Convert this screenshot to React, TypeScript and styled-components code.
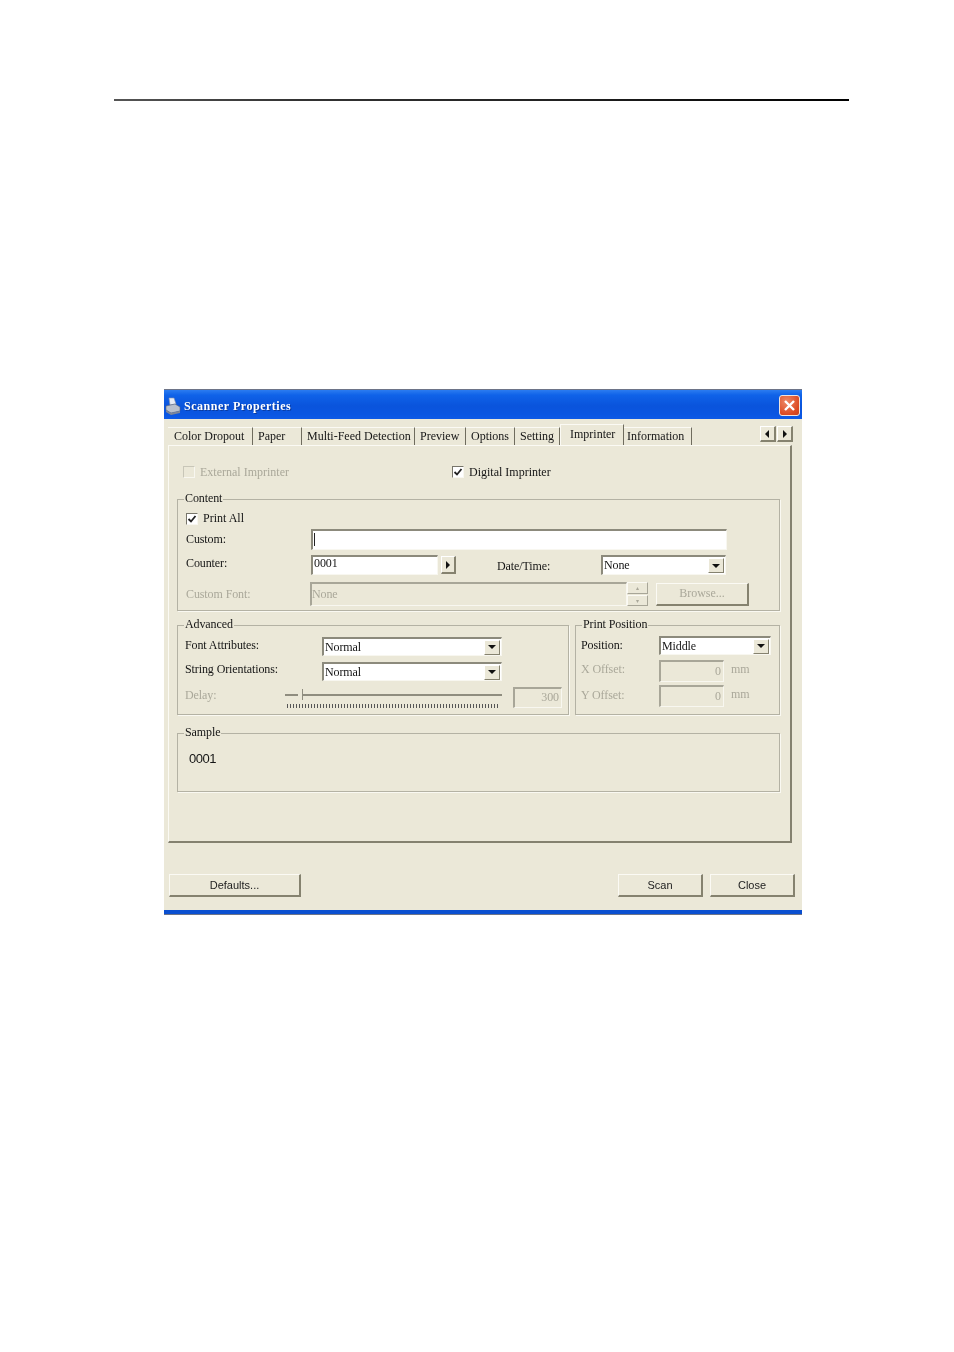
import styled, { createGlobalStyle } from "styled-components";

const GlobalStyle = createGlobalStyle`
  html, body {
    margin: 0;
    padding: 0;
    background: #fff;
  }
  body {
    font-family: "Liberation Serif", "Times New Roman", serif;
    font-size: 12px;
    letter-spacing: -0.1px;
    color: #151515;
  }
  * {
    box-sizing: border-box;
  }
`;

const Page = styled.div`
  width: 954px;
  height: 1352px;
  padding-top: 99px;
  overflow: hidden;
`;

const Rule = styled.hr`
  width: 735px;
  height: 2px;
  margin: 0 0 0 114px;
  border: none;
  background: linear-gradient(90deg, #555 0, #333 25%, #222 60%, #000 100%);
`;

const Dialog = styled.div`
  display: flex;
  flex-direction: column;
  width: 638px;
  height: 526px;
  margin: 288px 0 0 164px;
  background: #ebe8d8;
  filter: blur(0.45px);
`;

const TitleBar = styled.div`
  display: flex;
  align-items: center;
  height: 30px;
  padding: 2px 2px 0 1px;
  border-top: 1px solid #6d7488;
  background: linear-gradient(180deg, #2b7cf0 0, #0f62e8 18%, #0a54dc 55%, #0a56e2 85%, #0e5ae6 100%);
`;

const TitleText = styled.span`
  margin: 2px 0 0 3px;
  color: #fff;
  font-weight: 700;
  font-size: 12px;
  letter-spacing: 0.52px;
  text-shadow: 1px 1px 0 #0a3a9c;
`;

const CloseBox = styled.div`
  display: flex;
  align-items: center;
  justify-content: center;
  width: 21px;
  height: 21px;
  margin-left: auto;
  border: 1px solid #f0e4dc;
  border-radius: 3px;
  background: radial-gradient(circle at 35% 30%, #ee8a68, #dc4a22 70%, #c8401c);
`;

const TabStrip = styled.div`
  display: flex;
  align-items: flex-end;
  height: 26px;
  padding: 0 9px 0 4px;
`;

const Tab = styled.div<{ $w: number; $pad: number; $active?: boolean }>`
  display: flex;
  align-items: center;
  flex: none;
  width: ${(p) => p.$w}px;
  height: ${(p) => (p.$active ? 21 : 18)}px;
  padding: 0 0 ${(p) => (p.$active ? 2 : 0)}px ${(p) => p.$pad}px;
  border-top: 1px solid #fbfaf4;
  border-right: 1px solid #6f6c5e;
  border-left: ${(p) => (p.$active ? "1px solid #fbfaf4" : "none")};
  letter-spacing: 0;
  white-space: nowrap;
`;

const Scroller = styled.div`
  display: flex;
  align-self: flex-start;
  gap: 1px;
  margin: 7px 0 0 auto;
`;

const ScrollBtn = styled.div`
  display: flex;
  align-items: center;
  justify-content: center;
  width: 16px;
  height: 16px;
  border-top: 1px solid #fff;
  border-left: 1px solid #fff;
  border-right: 2px solid #85826f;
  border-bottom: 2px solid #85826f;
`;

const TabPanel = styled.div`
  display: flex;
  flex-direction: column;
  width: 624px;
  height: 398px;
  margin-left: 4px;
  padding: 18px 10px 0 8px;
  border-top: 1px solid #fbfaf4;
  border-left: 1px solid #fbfaf4;
  border-right: 2px solid #84816f;
  border-bottom: 2px solid #84816f;
`;

const ImprinterRow = styled.div`
  display: flex;
  height: 16px;
  padding-left: 6px;
`;

const Check = styled.label<{ $off?: boolean; $w?: number }>`
  display: flex;
  align-items: center;
  gap: 5px;
  width: ${(p) => (p.$w ? `${p.$w}px` : "auto")};
  color: ${(p) => (p.$off ? "#aaa89a" : "inherit")};
  letter-spacing: 0;
`;

const InsetCheck = styled(Check)`
  margin-left: 1px;
`;

const Box = styled.span<{ $off?: boolean }>`
  display: flex;
  align-items: center;
  justify-content: center;
  flex: none;
  width: 12px;
  height: 12px;
  border: 1px solid ${(p) => (p.$off ? "#c8c6b8" : "#77756a")};
  border-right-color: #f8f7f0;
  border-bottom-color: #f8f7f0;
  background: ${(p) => (p.$off ? "#ebe8d8" : "#fff")};
`;

const Group = styled.fieldset<{ $h: number; $w?: number }>`
  min-width: 0;
  width: ${(p) => (p.$w ? `${p.$w}px` : "100%")};
  height: ${(p) => p.$h}px;
  margin: 0;
  padding: 0 7px;
  border: 1px solid #b4b2a4;
  box-shadow: 1px 1px 0 #faf9f2;
`;

const Legend = styled.legend`
  height: 13px;
  margin-left: -1px;
  padding: 0 1px;
  line-height: 11px;
`;

const ContentGroup = styled(Group)`
  margin-top: 13px;
`;

const GroupRow = styled.div`
  display: flex;
  gap: 6px;
  margin-top: 8px;
`;

const SampleGroup = styled(Group)`
  margin-top: 12px;
`;

const Row = styled.div<{ $h: number; $mt?: number }>`
  display: flex;
  align-items: center;
  height: ${(p) => p.$h}px;
  margin-top: ${(p) => p.$mt ?? 0}px;
`;

const Label = styled.span<{ $w: number; $off?: boolean; $mt?: number; $ml?: number }>`
  flex: none;
  width: ${(p) => p.$w}px;
  margin-top: ${(p) => p.$mt ?? 0}px;
  margin-left: ${(p) => p.$ml ?? 0}px;
  color: ${(p) => (p.$off ? "#aaa89a" : "inherit")};
  white-space: nowrap;
`;

const Field = styled.div<{ $w: number; $off?: boolean; $start?: boolean }>`
  display: flex;
  align-items: center;
  justify-content: ${(p) => (p.$off && !p.$start ? "flex-end" : "flex-start")};
  flex: none;
  width: ${(p) => p.$w}px;
  height: 100%;
  padding: 0 2px 1px ${(p) => (p.$start ? 0 : 1)}px;
  border-top: 2px solid ${(p) => (p.$off ? "#a8a698" : "#8c8a7c")};
  border-left: 2px solid ${(p) => (p.$off ? "#a8a698" : "#8c8a7c")};
  border-right: 1px solid #f8f7f0;
  border-bottom: 1px solid #f8f7f0;
  background: ${(p) => (p.$off ? "#ebe8d8" : "#fff")};
  color: ${(p) => (p.$off ? "#aaa89a" : "inherit")};
`;

const Caret = styled.span`
  width: 1px;
  height: 13px;
  background: #222;
`;

const CounterValue = styled.span`
  margin-top: -4px;
`;

const SelectBox = styled(Field)`
  justify-content: space-between;
  padding: 0 0 0 1px;
`;

const DropBtn = styled.span`
  display: flex;
  align-items: center;
  justify-content: center;
  width: 16px;
  height: 15px;
  margin-right: 1px;
  border-top: 1px solid #fff;
  border-left: 1px solid #fff;
  border-right: 1px solid #85826f;
  border-bottom: 1px solid #85826f;
  background: #ebe8d8;
`;

const MiniBtn = styled(ScrollBtn)`
  width: 15px;
  height: 18px;
  margin-left: 3px;
`;

const DelayField = styled(Field)`
  margin-left: 11px;
`;

const Spinner = styled.div`
  display: flex;
  flex-direction: column;
  gap: 1px;
  width: 21px;
  height: 24px;
`;

const SpinBtn = styled.div`
  display: flex;
  align-items: center;
  justify-content: center;
  flex: 1;
  border-top: 1px solid #fbfaf4;
  border-left: 1px solid #fbfaf4;
  border-right: 1px solid #a8a698;
  border-bottom: 1px solid #a8a698;
  color: #aaa89a;
  font-size: 6px;
`;

const Button = styled.button<{ $w: number; $off?: boolean }>`
  flex: none;
  width: ${(p) => p.$w}px;
  height: 23px;
  padding: 0;
  border-top: 1px solid #fbfaf4;
  border-left: 1px solid #fbfaf4;
  border-right: 2px solid #85826f;
  border-bottom: 2px solid #85826f;
  border-radius: 0;
  background: #ebe8d8;
  color: ${(p) => (p.$off ? "#aaa89a" : "#222")};
  font-family: ${(p) => (p.$off ? '"Liberation Serif", serif' : '"Liberation Sans", Arial, sans-serif')};
  font-size: ${(p) => (p.$off ? 12 : 11)}px;
`;

const BrowseButton = styled(Button)`
  margin-left: 8px;
`;

const SliderWrap = styled.div`
  display: flex;
  flex: none;
  flex-direction: column;
  width: 217px;
  height: 21px;
  margin-left: 72px;
`;

const Track = styled.div`
  position: relative;
  height: 2px;
  margin-top: 7px;
  background: #8f8d7f;
`;

const Thumb = styled.span`
  position: absolute;
  top: -5px;
  left: 13px;
  width: 5px;
  height: 11px;
  border-right: 1px solid #8f8d7f;
  background: #ebe8d8;
`;

const Ticks = styled.div`
  height: 4px;
  margin: 8px 0 0 2px;
  width: 213px;
  background: repeating-linear-gradient(90deg, #555 0, #555 1px, transparent 1px, transparent 3px);
`;

const SampleText = styled.div`
  margin: 11px 0 0 4px;
  font-family: "Liberation Sans", Arial, sans-serif;
  font-size: 13px;
  letter-spacing: -0.5px;
`;

const Footer = styled.div`
  display: flex;
  gap: 7px;
  height: 23px;
  margin-top: 31px;
  padding: 0 7px 0 5px;
`;

const FooterGap = styled.div`
  flex: 1;
`;

const BottomBar = styled.div`
  height: 5px;
  margin-top: auto;
  border-bottom: 1px solid #6d7488;
  background: #0a4fd0;
`;

const TabList = [
  { text: "Color Dropout", w: 85, pad: 6 },
  { text: "Paper", w: 49, pad: 5 },
  { text: "Multi-Feed Detection", w: 113, pad: 5 },
  { text: "Preview", w: 51, pad: 5 },
  { text: "Options", w: 49, pad: 5 },
  { text: "Setting", w: 45, pad: 5 },
  { text: "Imprinter", w: 64, pad: 9, active: true },
  { text: "Information", w: 68, pad: 3 },
];

function ScannerIcon() {
  return (
    <svg width="16" height="18" viewBox="0 0 16 18">
      <path d="M4 1 L9 1 L11 7 L5 8 Z" fill="#e8ecf4" stroke="#8a94a8" strokeWidth="0.6" />
      <path d="M1 9 L10 7 L15 10 L15 14 L6 16 L1 13 Z" fill="#b9c0cc" stroke="#5c6578" strokeWidth="0.6" />
      <path d="M1 13 L6 16 L15 14 L15 16 L6 18 L1 15 Z" fill="#7d8698" />
    </svg>
  );
}

function CloseIcon() {
  return (
    <svg width="13" height="13" viewBox="0 0 13 13">
      <path d="M2 2 L11 11 M11 2 L2 11" stroke="#fff" strokeWidth="2.4" />
    </svg>
  );
}

function Tick() {
  return (
    <svg width="10" height="10" viewBox="0 0 10 10">
      <path d="M1.5 5 L4 7.5 L8.5 2" fill="none" stroke="#222" strokeWidth="1.8" />
    </svg>
  );
}

function Arrow({ dir }: { dir: "left" | "right" | "down" }) {
  const d = dir === "left" ? "M5 0 L5 8 L1 4 Z" : dir === "right" ? "M2 0 L2 8 L6 4 Z" : "M0 2 L8 2 L4 6 Z";
  return (
    <svg width="8" height="8" viewBox="0 0 8 8">
      <path d={d} fill="#111" />
    </svg>
  );
}

function Select({ w, value }: { w: number; value: string }) {
  return (
    <SelectBox $w={w}>
      {value}
      <DropBtn>
        <Arrow dir="down" />
      </DropBtn>
    </SelectBox>
  );
}

export default function App() {
  return (
    <>
      <GlobalStyle />
      <Page>
        <Rule />
        <Dialog>
          <TitleBar>
            <ScannerIcon />
            <TitleText>Scanner Properties</TitleText>
            <CloseBox>
              <CloseIcon />
            </CloseBox>
          </TitleBar>
          <TabStrip>
            {TabList.map((tab) => (
              <Tab key={tab.text} $w={tab.w} $pad={tab.pad} $active={tab.active}>
                {tab.text}
              </Tab>
            ))}
            <Scroller>
              <ScrollBtn>
                <Arrow dir="left" />
              </ScrollBtn>
              <ScrollBtn>
                <Arrow dir="right" />
              </ScrollBtn>
            </Scroller>
          </TabStrip>
          <TabPanel>
            <ImprinterRow>
              <Check $off $w={269}>
                <Box $off />
                External Imprinter
              </Check>
              <Check>
                <Box>
                  <Tick />
                </Box>
                Digital Imprinter
              </Check>
            </ImprinterRow>

            <ContentGroup $h={118}>
              <Legend>Content</Legend>
              <Row $h={13} $mt={6}>
                <InsetCheck>
                  <Box>
                    <Tick />
                  </Box>
                  Print All
                </InsetCheck>
              </Row>
              <Row $h={21} $mt={4}>
                <Label $w={125} $ml={1}>
                  Custom:
                </Label>
                <Field $w={416}>
                  <Caret />
                </Field>
              </Row>
              <Row $h={20} $mt={5}>
                <Label $w={125} $ml={1} $mt={-4}>
                  Counter:
                </Label>
                <Field $w={127}>
                  <CounterValue>0001</CounterValue>
                </Field>
                <MiniBtn>
                  <Arrow dir="right" />
                </MiniBtn>
                <Label $w={104} $ml={41} $mt={3}>
                  Date/Time:
                </Label>
                <Select w={125} value="None" />
              </Row>
              <Row $h={24} $mt={7}>
                <Label $w={124} $ml={1} $off>
                  Custom Font:
                </Label>
                <Field $w={317} $off $start>
                  None
                </Field>
                <Spinner>
                  <SpinBtn>▴</SpinBtn>
                  <SpinBtn>▾</SpinBtn>
                </Spinner>
                <BrowseButton $w={93} $off>
                  Browse...
                </BrowseButton>
              </Row>
            </ContentGroup>

            <GroupRow>
              <Group $h={96} $w={392}>
                <Legend>Advanced</Legend>
                <Row $h={19} $mt={5}>
                  <Label $w={137} $mt={-2}>
                    Font Attributes:
                  </Label>
                  <Select w={180} value="Normal" />
                </Row>
                <Row $h={19} $mt={6}>
                  <Label $w={137} $mt={-4}>
                    String Orientations:
                  </Label>
                  <Select w={180} value="Normal" />
                </Row>
                <Row $h={21} $mt={6}>
                  <Label $w={28} $off $mt={-4}>
                    Delay:
                  </Label>
                  <SliderWrap>
                    <Track>
                      <Thumb />
                    </Track>
                    <Ticks />
                  </SliderWrap>
                  <DelayField $w={49} $off>
                    300
                  </DelayField>
                </Row>
              </Group>
              <Group $h={96} $w={205}>
                <Legend>Print Position</Legend>
                <Row $h={19} $mt={4}>
                  <Label $w={78} $ml={-2}>
                    Position:
                  </Label>
                  <Select w={112} value="Middle" />
                </Row>
                <Row $h={22} $mt={5}>
                  <Label $w={78} $ml={-2} $off $mt={-4}>
                    X Offset:
                  </Label>
                  <Field $w={65} $off>
                    0
                  </Field>
                  <Label $w={24} $ml={7} $off $mt={-3}>
                    mm
                  </Label>
                </Row>
                <Row $h={22} $mt={3}>
                  <Label $w={78} $ml={-2} $off $mt={-2}>
                    Y Offset:
                  </Label>
                  <Field $w={65} $off>
                    0
                  </Field>
                  <Label $w={24} $ml={7} $off $mt={-4}>
                    mm
                  </Label>
                </Row>
              </Group>
            </GroupRow>

            <SampleGroup $h={65}>
              <Legend>Sample</Legend>
              <SampleText>0001</SampleText>
            </SampleGroup>
          </TabPanel>
          <Footer>
            <Button $w={132}>Defaults...</Button>
            <FooterGap />
            <Button $w={85}>Scan</Button>
            <Button $w={85}>Close</Button>
          </Footer>
          <BottomBar />
        </Dialog>
      </Page>
    </>
  );
}
